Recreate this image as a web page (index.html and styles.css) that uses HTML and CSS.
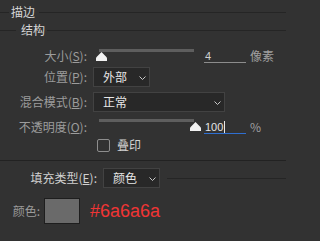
FILE: index.html
```html
<!DOCTYPE html>
<html lang="zh-CN">
<head>
<meta charset="utf-8">
<title>描边</title>
<link rel="stylesheet" href="styles.css">
</head>
<body>
<div class="panel">
  <div class="legend legend-title"><span class="lead"></span><span class="ltext">描边</span><span class="rule"></span></div>
  <div class="legend legend-sub"><span class="lead"></span><span class="ltext">结构</span><span class="rule"></span></div>

  <div class="row row-size">
    <span class="lbl">大小(<u>S</u>):</span>
    <div class="slider"><div class="track"></div><svg class="thumb" style="left:-3px" width="11" height="9" viewBox="0 0 11 9"><path d="M5.5 0 L10.4 4.9 Q11 5.5 11 6.4 L11 9 L0 9 L0 6.4 Q0 5.5 0.6 4.9 Z" fill="#f2f2f2"/></svg></div>
    <div class="num">4</div>
    <span class="unit">像素</span>
  </div>

  <div class="row row-pos">
    <span class="lbl">位置(<u>P</u>):</span>
    <div class="select select-short"><span class="sel-text">外部</span><svg class="chev" width="7" height="4" viewBox="0 0 7 4"><path d="M0.5 0.5 L3.5 3.5 L6.5 0.5" fill="none" stroke="#c8c8c8" stroke-width="1"/></svg></div>
  </div>

  <div class="row row-blend">
    <span class="lbl">混合模式(<u>B</u>):</span>
    <div class="select select-long"><span class="sel-text">正常</span><svg class="chev" width="7" height="4" viewBox="0 0 7 4"><path d="M0.5 0.5 L3.5 3.5 L6.5 0.5" fill="none" stroke="#c8c8c8" stroke-width="1"/></svg></div>
  </div>

  <div class="row row-opacity">
    <span class="lbl">不透明度(<u>O</u>):</span>
    <div class="slider slider-high"><div class="track"></div><svg class="thumb" style="left:91px" width="11" height="9" viewBox="0 0 11 9"><path d="M5.5 0 L10.4 4.9 Q11 5.5 11 6.4 L11 9 L0 9 L0 6.4 Q0 5.5 0.6 4.9 Z" fill="#f2f2f2"/></svg></div>
    <div class="num num-active">100<span class="caret"></span></div>
    <span class="unit">%</span>
  </div>

  <div class="row row-check">
    <span class="lbl"></span>
    <span class="checkbox"></span>
    <span class="check-text">叠印</span>
  </div>

  <div class="separator"></div>

  <div class="row row-fill">
    <span class="lbl lbl-fill">填充类型(<u>E</u>):</span>
    <div class="select select-short select-fill"><span class="sel-text">颜色</span><svg class="chev" width="7" height="4" viewBox="0 0 7 4"><path d="M0.5 0.5 L3.5 3.5 L6.5 0.5" fill="none" stroke="#c8c8c8" stroke-width="1"/></svg></div>
    <span class="rule fill-rule"></span>
  </div>

  <div class="row row-color">
    <span class="lbl lbl-color">颜色:</span>
    <span class="swatch"></span>
    <span class="hex">#6a6a6a</span>
  </div>
</div>
</body>
</html>
```

FILE: styles.css
```css
html, body {
  margin: 0;
  padding: 0;
  background: #323232;
}

body {
  width: 286px;
  height: 241px;
  overflow: hidden;
  font-family: "Noto Sans CJK SC", "Noto Sans", sans-serif;
  font-size: 12px;
  color: #a0a0a0;
}

.panel {
  display: flex;
  flex-direction: column;
  padding-top: 4px;
}

/* fieldset-like headings */
.legend {
  display: flex;
  align-items: center;
  height: 16px;
  line-height: 16px;
}

.legend .lead,
.rule {
  display: block;
  height: 1px;
  background: #252525;
}

.legend .rule {
  flex: 1;
}

.ltext {
  color: #d6d6d6;
  font-size: 12px;
}

.legend-title .lead { width: 9px; }
.legend-title .ltext { margin: 0 4px 0 2px; }

.legend-sub { margin-top: 2px; }
.legend-sub .lead { width: 16px; }
.legend-sub .ltext { margin: 0 2px 0 5px; }

/* rows */
.row {
  display: flex;
  align-items: center;
  height: 20px;
  line-height: 16px;
}

.lbl {
  width: 87px;
  flex: none;
  text-align: right;
  color: #9c9c9c;
  white-space: nowrap;
}

.lbl u {
  text-decoration: underline;
  text-underline-offset: 1px;
}

.row-size { margin-top: 8px; }
.row-pos { margin-top: 1px; }
.row-blend { margin-top: 5px; }
.row-opacity { margin-top: 5px; }
.row-check { height: 16px; }

/* slider */
.slider {
  position: relative;
  align-self: flex-start;
  width: 95px;
  height: 13px;
  margin-top: 3px;
  margin-left: 12px;
  flex: none;
}

.slider-high { margin-top: 2px; }

.track {
  height: 3px;
  background: #5e5e5e;
}

.thumb {
  position: absolute;
  top: 3px;
  display: block;
}

/* number field */
.num {
  position: relative;
  align-self: flex-start;
  width: 41px;
  height: 12px;
  margin-top: 4px;
  margin-left: 10px;
  padding-left: 1px;
  border-bottom: 1px solid #8c8c8c;
  font-family: "Liberation Sans", sans-serif;
  font-size: 11px;
  line-height: 12px;
  color: #d0d0d0;
  flex: none;
}

.num-active {
  border-bottom-color: #2f6fd1;
  color: #e4e4e4;
}

.caret {
  display: inline-block;
  width: 1px;
  height: 12px;
  margin-left: 1px;
  vertical-align: top;
  background: #e8e8e8;
}

.unit {
  margin-left: 4px;
  color: #a0a0a0;
  font-size: 12px;
}

/* select */
.select {
  position: relative;
  display: flex;
  align-items: center;
  height: 20px;
  box-sizing: border-box;
  margin-left: 6px;
  padding-left: 9px;
  background: #282828;
  border: 1px solid #424242;
  flex: none;
}

.select-short { width: 57px; }
.select-long { width: 132px; }

.sel-text {
  color: #e6e6e6;
}

.chev {
  position: absolute;
  right: 3px;
  top: 8px;
}

/* checkbox */
.checkbox {
  width: 13px;
  height: 13px;
  box-sizing: border-box;
  margin-left: 10px;
  border: 1px solid #8e8e8e;
  border-radius: 2px;
  flex: none;
}

.check-text {
  margin-left: 7px;
  color: #d2d2d2;
}

.separator {
  height: 1px;
  margin-top: 7px;
  background: #222222;
}

/* fill type */
.row-fill { margin-top: 7px; }

.lbl-fill {
  width: 97px;
  color: #d0d0d0;
}

.fill-rule {
  flex: 1;
  margin-left: 7px;
}

/* color */
.row-color {
  height: 26px;
  margin-top: 10px;
}

.lbl-color {
  width: 40px;
  color: #9c9c9c;
}

.swatch {
  width: 36px;
  height: 26px;
  box-sizing: border-box;
  margin-left: 4px;
  background: #6a6a6a;
  border: 1px solid #1e1e1e;
  flex: none;
}

.hex {
  margin-left: 10px;
  font-family: "Liberation Sans", Arial, sans-serif;
  font-size: 18px;
  line-height: 20px;
  color: #f03535;
}
```
